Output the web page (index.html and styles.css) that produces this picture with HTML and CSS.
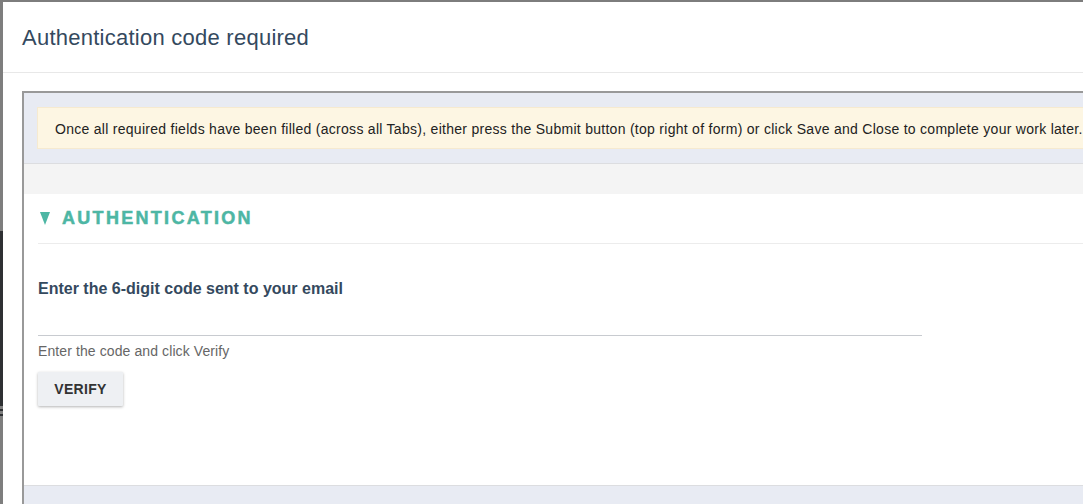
FILE: index.html
```html
<!DOCTYPE html>
<html>
<head>
<meta charset="utf-8">
<link rel="stylesheet" href="styles.css">
</head>
<body>
<div class="screen">
  <div class="backdrop-strip"></div>
  <div class="modal">
    <div class="modal-header">
      <h1 class="modal-title">Authentication code required</h1>
    </div>
    <div class="modal-body">
      <div class="frame">
        <div class="notice-band">
          <div class="notice">Once all required fields have been filled (across all Tabs), either press the Submit button (top right of form) or click Save and Close to complete your work later.</div>
        </div>
        <div class="gray-band"></div>
        <div class="section">
          <div class="section-title"><span class="caret"></span>AUTHENTICATION</div>
          <div class="field">
            <label class="field-label">Enter the 6-digit code sent to your email</label>
            <div class="field-input"></div>
            <div class="field-help">Enter the code and click Verify</div>
            <button class="btn">VERIFY</button>
          </div>
        </div>
        <div class="bottom-band"></div>
      </div>
    </div>
  </div>
</div>
</body>
</html>
```
FILE: styles.css
```css
html, body {
  margin: 0;
  padding: 0;
  overflow: hidden;
  width: 1083px;
  height: 504px;
  background: #fff;
}
.screen {
  display: flex;
  height: 504px;
  border-top: 2px solid #7d7d7d;
  box-sizing: border-box;
  font-family: "Liberation Sans", Arial, sans-serif;
}
.backdrop-strip {
  flex: 0 0 3px;
  background: linear-gradient(to bottom,
    #7e7e7e 0, #7e7e7e 229px,
    #2e3033 229px, #2e3033 404px,
    #7e7e7e 404px, #7e7e7e 407px,
    #2e3033 407px, #2e3033 409px,
    #7e7e7e 409px, #7e7e7e 412px,
    #2e3033 412px, #2e3033 414px,
    #7e7e7e 414px);
}
.modal {
  flex: 1;
  display: flex;
  flex-direction: column;
  min-width: 0;
}
.modal-header {
  height: 70px;
  border-bottom: 1px solid #e8e8e8;
  display: flex;
  align-items: center;
  padding-left: 19px;
}
.modal-title {
  margin: 0;
  font-weight: normal;
  font-size: 22px;
  letter-spacing: 0.25px;
  color: #34495e;
  position: relative;
  top: 1px;
}
.modal-body {
  padding: 18px 0 0 19px;
  flex: 1;
  display: flex;
  min-height: 0;
}
.frame {
  flex: 1;
  margin-right: -20px;
  border-top: 2px solid #999;
  border-left: 2px solid #999;
  display: flex;
  flex-direction: column;
}
.notice-band {
  background: #e8ebf3;
  padding: 14px 0 14px 13px;
  border-bottom: 1px solid #dcdde0;
}
.notice {
  background: #fdf6e3;
  border: 1px solid #f6ead0;
  height: 42px;
  box-sizing: border-box;
  display: flex;
  align-items: center;
  padding-left: 17px;
  padding-top: 1px;
  font-size: 14px;
  letter-spacing: 0.28px;
  color: #222;
  white-space: nowrap;
}
.gray-band {
  background: #f4f4f4;
  height: 30px;
}
.section {
  flex: 1;
  padding: 0 0 0 14px;
  background: #fff;
}
.section-title {
  height: 50px;
  border-bottom: 1px solid #ececec;
  display: flex;
  align-items: center;
  font-size: 18px;
  font-weight: bold;
  letter-spacing: 2.3px;
  color: #4db6a4;
  -webkit-text-stroke: 0.5px #4db6a4;
  box-sizing: border-box;
}
.caret {
  width: 0;
  height: 0;
  border-left: 5px solid transparent;
  border-right: 5px solid transparent;
  border-top: 13px solid #4db6a4;
  margin-left: 2px;
  margin-right: 12px;
}
.field {
  padding-top: 36px;
}
.field-label {
  display: block;
  font-size: 16px;
  font-weight: bold;
  color: #34495e;
  line-height: 18px;
}
.field-input {
  width: 884px;
  height: 37px;
  border-bottom: 1px solid #c8cbd0;
}
.field-help {
  font-size: 14px;
  letter-spacing: 0.1px;
  color: #666;
  margin-top: 7px;
  line-height: 17px;
}
.btn {
  margin-top: 12px;
  width: 85px;
  height: 34px;
  border: none;
  background: #eef0f3;
  box-shadow: 0 1px 3px rgba(0,0,0,0.3);
  font-family: "Liberation Sans", Arial, sans-serif;
  font-weight: bold;
  font-size: 14px;
  letter-spacing: 0.3px;
  color: #333;
  padding: 0;
  border-radius: 1px;
}
.bottom-band {
  height: 18px;
  background: #e8ebf3;
  border-top: 1px solid #dcdde0;
}
```
